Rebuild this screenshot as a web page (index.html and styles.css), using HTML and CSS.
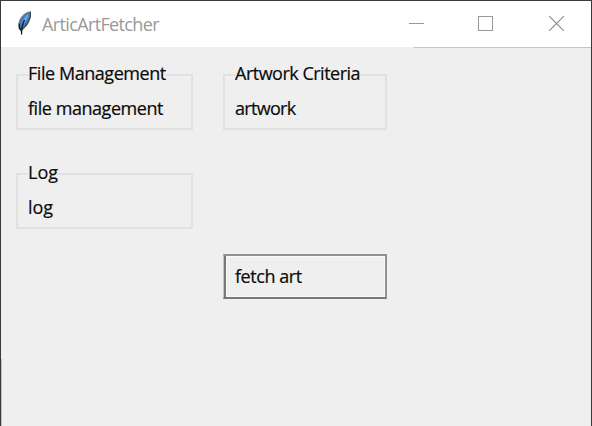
FILE: index.html
```html
<!DOCTYPE html>
<html lang="en">
<head>
<meta charset="utf-8">
<title>ArticArtFetcher</title>
<link rel="stylesheet" href="styles.css">
</head>
<body>
<div class="window">
  <header class="titlebar">
    <svg class="feather" width="16" height="24" viewBox="0 0 16 24">
      <path d="M14.500 .8C8.500 1.500 4 6.500 3 12L3.200 17.500 5 19.500C11 16 14.500 10 14.500 .8Z" fill="#3e7cc0" stroke="#777" stroke-width="1"/>
      <path d="M12.500 2.500C9 5 7 8.500 5.500 13.500L8.500 12C11 9 12.500 6 12.500 2.500Z" fill="#69a6e4"/>
      <path d="M14.300 1V6L12.500 10.500L9 15.500L5.500 19" fill="none" stroke="#333" stroke-width="1"/>
      <path d="M8.500 9C6.500 13 5.500 17 5.500 23.500" fill="none" stroke="#151515" stroke-width="1.300"/>
      <path d="M3.200 12.500L3.500 17L5.500 20" fill="none" stroke="#222" stroke-width="1.500"/>
    </svg>
    <h1 class="title"><span class="fit fit-title">ArticArtFetcher</span></h1>
    <div class="controls">
      <svg width="15" height="15" viewBox="0 0 15 15"><path d="M0 7.500H15" stroke="#999"/></svg>
      <svg class="maximize" width="15" height="15" viewBox="0 0 15 15"><rect x=".5" y=".5" width="14" height="14" fill="none" stroke="#999"/></svg>
      <svg width="15" height="15" viewBox="0 0 15 15"><path d="M0 0L15 15M15 0L0 15" stroke="#8c8c8c" stroke-width="1.100"/></svg>
    </div>
  </header>
  <main class="content">
    <section class="group">
      <h2 class="legend"><span class="fit fit-file">File Management</span></h2>
      <p class="label"><span class="fit fit-file-label">file management</span></p>
    </section>
    <section class="group">
      <h2 class="legend"><span class="fit fit-criteria">Artwork Criteria</span></h2>
      <p class="label"><span class="fit fit-artwork">artwork</span></p>
    </section>
    <section class="group">
      <h2 class="legend"><span class="fit">Log</span></h2>
      <p class="label"><span class="fit">log</span></p>
    </section>
    <button class="fetch"><span class="fit fit-fetch">fetch art</span></button>
  </main>
</div>
</body>
</html>
```
FILE: styles.css
```css
* {
  box-sizing: border-box;
}

body {
  margin: 0;
  background: #efefef;
  font-family: "Open Sans", "Noto Sans", sans-serif;
  font-size: 18px;
  line-height: 24px;
  color: #0a0a0a;
}

.window {
  height: 426px;
  overflow: hidden;
  border: 1px solid #3b393b;
  border-bottom: 0;
  background: linear-gradient(#c3c3c3, #c3c3c3) left bottom / 1px 67px no-repeat #efefef;
}

.titlebar {
  display: flex;
  align-items: flex-start;
  height: 47px;
  padding: 10px 27px 0 15px;
  background: linear-gradient(to right, #efefef 413px, #c3c3c3 413px) bottom / 100% 1px no-repeat #fff;
}

.feather {
  flex: none;
}

.title {
  margin: 1px 0 0 10px;
  color: #999;
  font-size: 18px;
  font-weight: 400;
}

.controls {
  display: flex;
  gap: 55px;
  margin: 5px 0 0 auto;
}

.controls svg {
  display: block;
}

.controls .maximize {
  margin: 0 1px 0 -1px;
}

.content {
  display: grid;
  grid-template-columns: 177px 164px;
  grid-template-rows: 56px 56px 47px;
  column-gap: 30px;
  row-gap: 43px;
  padding: 26px 0 0 15px;
  -webkit-text-stroke: 0.2px;
}

.group {
  border: 2px solid #e1e1e1;
  padding-left: 10px;
}

.legend {
  width: fit-content;
  margin: -15px 0 11px;
  background: #efefef;
  font-size: inherit;
  font-weight: 400;
}

.label {
  margin: 0;
}

.fit {
  display: block;
  white-space: nowrap;
}

.fit-title { letter-spacing: -0.630px; }
.fit-file { letter-spacing: -0.450px; }
.fit-file-label { letter-spacing: -0.450px; }
.fit-criteria { letter-spacing: -0.500px; }
.fit-artwork { letter-spacing: -0.700px; }
.fit-fetch { letter-spacing: -0.450px; }

.fetch {
  grid-area: 3 / 2;
  height: 45px;
  margin-top: -18px;
  padding: 0 0 1px 11px;
  border: 2px solid;
  border-color: #929292 #929292 #777 #c4c4c4;
  border-left-width: 1px;
  outline: 0;
  background: #efefef;
  box-shadow: inset 2px 0 #777, inset 3px 1px #fafafa, inset -1px -1px #f8f8f8;
  color: inherit;
  font: inherit;
  text-align: left;
}
```
